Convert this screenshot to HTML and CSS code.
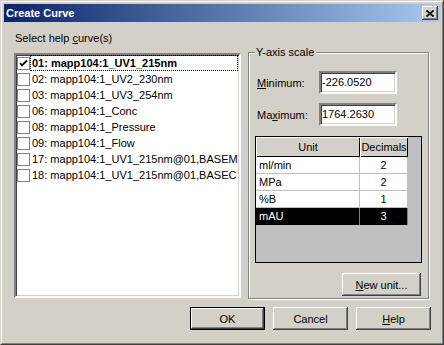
FILE: index.html
```html
<!DOCTYPE html>
<html>
<head>
<meta charset="utf-8">
<link rel="stylesheet" href="styles.css">
</head>
<body>
<div class="window">
  <div class="frame">
    <div class="titlebar">
      <span class="title">Create Curve</span>
      <span class="close"><svg width="8" height="7" viewBox="0 0 8 7"><path d="M0.5 0.5 L7.5 6.5 M7.5 0.5 L0.5 6.5" stroke="#000" stroke-width="1.7" fill="none"/></svg></span>
    </div>
    <div class="body">
      <div class="main">
        <div class="left">
          <div class="label">Select help <u>c</u>urve(s)</div>
          <div class="listbox">
            <div class="item"><span class="cb"><svg width="11" height="11" viewBox="0 0 11 11"><path d="M2 5 L4 7.5 L9 2.5" stroke="#000" stroke-width="1.8" fill="none"/></svg></span><span class="txt focus bold">01: mapp104:1_UV1_215nm</span></div>
            <div class="item"><span class="cb"></span><span class="txt">02: mapp104:1_UV2_230nm</span></div>
            <div class="item"><span class="cb"></span><span class="txt">03: mapp104:1_UV3_254nm</span></div>
            <div class="item"><span class="cb"></span><span class="txt">06: mapp104:1_Conc</span></div>
            <div class="item"><span class="cb"></span><span class="txt">08: mapp104:1_Pressure</span></div>
            <div class="item"><span class="cb"></span><span class="txt">09: mapp104:1_Flow</span></div>
            <div class="item"><span class="cb"></span><span class="txt">17: mapp104:1_UV1_215nm@01,BASEM</span></div>
            <div class="item"><span class="cb"></span><span class="txt">18: mapp104:1_UV1_215nm@01,BASEC</span></div>
          </div>
        </div>
        <div class="group">
          <div class="legend">Y-axis scale</div>
          <div class="field">
            <span class="flabel"><u>M</u>inimum:</span>
            <span class="input">-226.0520</span>
          </div>
          <div class="field second">
            <span class="flabel">Ma<u>x</u>imum:</span>
            <span class="input">1764.2630</span>
          </div>
          <div class="grid">
            <div class="row head">
              <span class="c1">Unit</span><span class="c2">Decimals</span>
            </div>
            <div class="row">
              <span class="c1">ml/min</span><span class="c2">2</span>
            </div>
            <div class="row">
              <span class="c1">MPa</span><span class="c2">2</span>
            </div>
            <div class="row">
              <span class="c1">%B</span><span class="c2">1</span>
            </div>
            <div class="row sel">
              <span class="c1">mAU</span><span class="c2">3</span>
            </div>
          </div>
          <div class="newrow"><span class="btn newunit"><u>N</u>ew unit...</span></div>
        </div>
      </div>
      <div class="buttons">
        <span class="btn default">OK</span>
        <span class="btn">Cancel</span>
        <span class="btn"><u>H</u>elp</span>
      </div>
    </div>
  </div>
</div>
</body>
</html>
```

FILE: styles.css
```css
* { box-sizing: border-box; }
html, body { margin: 0; padding: 0; background: #D4D0C8; }
body {
  font-family: "Liberation Sans", Arial, sans-serif;
  font-size: 11px;
  color: #000;
  width: 444px;
  height: 345px;
  overflow: hidden;
}
.window {
  width: 444px;
  height: 345px;
  border: 1px solid;
  border-color: #D4D0C8 #404040 #404040 #D4D0C8;
}
.frame {
  height: 100%;
  border: 1px solid;
  border-color: #FFFFFF #808080 #808080 #FFFFFF;
  padding: 2px;
}
.titlebar {
  height: 18px;
  background: linear-gradient(to right, #0A246A, #A6CAF0);
  display: flex;
  align-items: center;
  justify-content: space-between;
  padding: 0 2px 0 2px;
}
.title {
  color: #fff;
  font-weight: bold;
  font-size: 11px;
  line-height: 13px;
  padding-left: 0px;
}
.close {
  width: 16px;
  height: 14px;
  background: #D4D0C8;
  display: flex;
  align-items: center;
  justify-content: center;
  box-shadow: inset -1px -1px 0 #404040, inset 1px 1px 0 #FFFFFF, inset -2px -2px 0 #808080;
  padding-left: 0px;
}
.body {
  padding: 10px 9px 0 10px;
}
.main {
  display: flex;
  align-items: flex-start;
}
.left {
  width: 227px;
}
.label {
  height: 13px;
  line-height: 13px;
  margin-left: 1px;
  margin-bottom: 8px;
}
.listbox {
  height: 245px;
  background: #fff;
  border: 2px solid;
  border-color: #808080 #FFFFFF #FFFFFF #808080;
  box-shadow: inset 1px 1px 0 #404040, inset -1px -1px 0 #D4D0C8;
  padding: 0 1px 0 1px;
}
.item {
  height: 16px;
  display: flex;
  align-items: center;
  white-space: nowrap;
}
.cb {
  width: 13px;
  height: 13px;
  border: 1px solid #808080;
  background: #fff;
  display: flex;
  align-items: center;
  justify-content: center;
  flex: none;
}
.txt {
  flex: 1;
  height: 16px;
  line-height: 16px;
  padding-left: 1px;
  margin-left: 0px;
  border: 1px solid transparent;
  line-height: 14px;
}
.focus {
  border: 1px dotted #000;
}
.bold { font-weight: bold; }
.group {
  width: 181px;
  height: 247px;
  margin-left: 7px;
  margin-top: 20px;
  border: 1px solid #808080;
  box-shadow: 1px 1px 0 #FFFFFF, inset 1px 1px 0 #FFFFFF;
  padding: 0 6px 0 6px;
}
.legend {
  display: inline-block;
  background: #D4D0C8;
  height: 13px;
  line-height: 13px;
  margin-top: -7px;
  vertical-align: top;
  padding: 0 2px 0 1px;
}
.field {
  display: flex;
  align-items: center;
  height: 23px;
  margin-top: 6px;
}
.field.second { margin-top: 9px; }
.flabel {
  width: 64px;
  padding-left: 2px;
}
.input {
  width: 78px;
  height: 23px;
  background: #fff;
  border: 2px solid;
  border-color: #808080 #FFFFFF #FFFFFF #808080;
  box-shadow: inset 1px 1px 0 #404040, inset -1px -1px 0 #D4D0C8;
  padding: 3px 0 0 1px;
  line-height: 13px;
}
.grid {
  margin-top: 10px;
  width: 167px;
  height: 127px;
  border: 1px solid #000;
  background: #C0C0C0;
}
.row {
  display: flex;
  height: 17px;
  width: 152px;
}
.row span {
  background: #fff;
  border-right: 1px solid #C0C0C0;
  border-bottom: 1px solid #C0C0C0;
  line-height: 16px;
}
.c1 { width: 104px; padding-left: 3px; }
.c2 { width: 48px; text-align: center; }
.row.head { height: 20px; }
.row.head span {
  background: #D4D0C8;
  border: none;
  box-shadow: inset 1px 1px 0 #FFFFFF, inset -1px -1px 0 #000000;
  line-height: 20px;
  text-align: center;
  padding: 0;
}
.row.sel span {
  background: #000;
  color: #fff;
  border-right-color: #808080;
  border-bottom: none;
}
.newrow {
  margin-top: 10px;
  display: flex;
  justify-content: flex-end;
  padding-right: 1px;
}
.btn {
  display: flex;
  align-items: center;
  justify-content: center;
  width: 75px;
  height: 23px;
  background: #D4D0C8;
  box-shadow: inset -1px -1px 0 #404040, inset 1px 1px 0 #FFFFFF, inset -2px -2px 0 #808080;
}
.newunit { width: 79px; }
.buttons {
  display: flex;
  justify-content: flex-end;
  gap: 8px;
  margin-top: 8px;
}
.btn.default {
  border: 1px solid #000;
}
u { text-decoration: underline; text-underline-offset: 1px; }
```
